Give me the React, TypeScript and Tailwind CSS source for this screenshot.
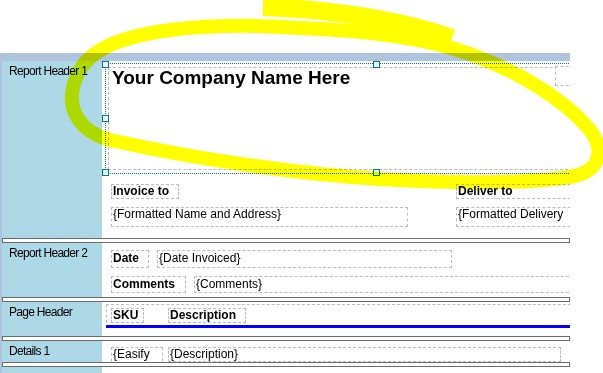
import type { ReactNode } from "react";

function Band({ label, h, children }: { label: string; h: string; children?: ReactNode }) {
  return (
    <div className={`flex ${h}`}>
      <div className="w-[100px] shrink-0 bg-[#add8e6] pl-[7px] pt-[3px] text-[12px] leading-[14px] tracking-[-0.7px] text-black">
        {label}
      </div>
      <div className="relative flex-1 overflow-hidden bg-white">{children}</div>
    </div>
  );
}

function Sep() {
  return <div className="h-[5px] border border-[#6b6b6b] bg-white" />;
}

function Field({ pos, bold, text }: { pos: string; bold?: boolean; text?: string }) {
  return (
    <div
      className={`absolute overflow-hidden whitespace-nowrap border border-dashed border-[#bdbdbd] pl-[1px] text-[12px] leading-[13px] text-black ${pos} ${
        bold ? "font-bold" : ""
      }`}
    >
      {text}
    </div>
  );
}

function Handle({ pos }: { pos: string }) {
  return <div className={`absolute h-[7px] w-[7px] border border-[#008080] bg-[#eaffff] ${pos}`} />;
}

export default function App() {
  return (
    <div className="relative h-[373px] w-[603px] overflow-hidden bg-white font-['Liberation_Sans',Arial,sans-serif]">
      <div className="w-[570px] pt-[53px]">
        <div className="h-2 bg-[#b0c4de]" />
        <div className="border-l-2 border-[#b0c4de]">
          <Band label="Report Header 1" h="h-[177px]">
            <div className="absolute left-[3px] top-[2px] h-[111px] w-[480px] border border-dotted border-[#008080]" />
            <div className="absolute left-[6px] top-[6px] h-[103px] w-[480px] border border-dashed border-[#bdbdbd]" />
            <div className="absolute left-[453px] top-[5px] h-[20px] w-[30px] border border-dashed border-[#bdbdbd] bg-white" />
            <div className="absolute left-[10px] top-[7px] text-[19px] font-bold leading-[19px] text-black">
              Your Company Name Here
            </div>
            <Handle pos="left-0 top-0" />
            <Handle pos="left-0 top-[54px]" />
            <Handle pos="left-0 top-[108px]" />
            <Handle pos="left-[271px] top-0" />
            <Handle pos="left-[271px] top-[108px]" />
            <Field pos="left-[9px] top-[123px] h-[15px] w-[68px]" bold text="Invoice to" />
            <Field pos="left-[9px] top-[146px] h-[20px] w-[297px]" text="{Formatted Name and Address}" />
            <Field pos="left-[354px] top-[123px] h-[15px] w-[130px]" bold text="Deliver to" />
            <Field pos="left-[354px] top-[146px] h-[20px] w-[130px]" text="{Formatted Delivery" />
          </Band>
          <Sep />
          <Band label="Report Header 2" h="h-[54px]">
            <Field pos="left-[9px] top-[7px] h-[18px] w-[38px] pt-[1px]" bold text="Date" />
            <Field pos="left-[55px] top-[7px] h-[18px] w-[295px] pt-[1px]" text="{Date Invoiced}" />
            <Field pos="left-[9px] top-[33px] h-[17px] w-[75px] pt-[1px]" bold text="Comments" />
            <Field pos="left-[92px] top-[33px] h-[17px] w-[400px] pt-[1px]" text="{Comments}" />
          </Band>
          <Sep />
          <Band label="Page Header" h="h-[34px]">
            <div className="absolute left-[4px] top-[2px] h-[24px] w-[480px] border border-dashed border-[#bdbdbd]" />
            <Field pos="left-[9px] top-[6px] h-[15px] w-[33px]" bold text="SKU" />
            <Field pos="left-[66px] top-[6px] h-[15px] w-[78px]" bold text="Description" />
            <div className="absolute left-[4px] top-[23px] h-[3px] w-[480px] bg-[#0000ff]" />
          </Band>
          <Sep />
          <Band label="Details 1" h="h-[21px]">
            <Field pos="left-[9px] top-[6px] h-[20px] w-[52px] leading-[11px]" text="{Easify" />
            <Field pos="left-[66px] top-[6px] h-[15px] w-[393px] leading-[11px]" text="{Description}" />
          </Band>
          <Sep />
          <Band label="" h="h-[7px]" />
        </div>
      </div>

      <svg
        className="pointer-events-none absolute left-0 top-0 mix-blend-multiply"
        width="603"
        height="373"
        viewBox="0 0 603 373"
      >
        <path d="M263 7 C330 9, 400 20, 452 38" fill="none" stroke="#ffff00" strokeWidth="18" />
        <path
          d="M300 28 C360 30, 420 36, 470 54 C520 72, 565 100, 590 130 C605 150, 600 170, 575 176 C530 184, 450 183, 380 179 C300 174, 200 160, 110 140 C80 132, 68 110, 73 88 C79 55, 110 38, 170 30 C220 24, 260 25, 300 28 Z"
          fill="none"
          stroke="#ffff00"
          strokeWidth="14"
        />
      </svg>
    </div>
  );
}
